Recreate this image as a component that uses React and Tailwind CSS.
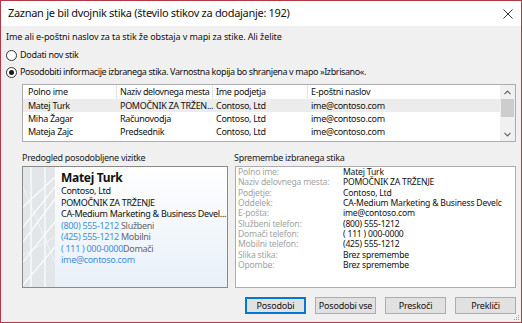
import React from "react";

const rows = [
  ["Matej Turk", "POMOČNIK ZA TRŽEN...", "Contoso, Ltd", "ime@contoso.com", true],
  ["Miha Žagar", "Računovodja", "Contoso, Ltd", "ime@contoso.com", false],
  ["Mateja Zajc", "Predsednik", "Contoso, Ltd", "ime@contoso.com", false],
];

const changes = [
  ["Polno ime:", "Matej Turk"],
  ["Naziv delovnega mesta:", "POMOČNIK ZA TRŽENJE"],
  ["Podjetje:", "Contoso, Ltd"],
  ["Oddelek:", "CA-Medium Marketing & Business Develc"],
  ["E-pošta:", "ime@contoso.com"],
  ["Službeni telefon:", "(800) 555-1212"],
  ["Domači telefon:", "( 111 ) 000-0000"],
  ["Mobilni telefon:", "(425) 555-1212"],
  ["Slika stika:", "Brez spremembe"],
  ["Opombe:", "Brez spremembe"],
];

function Radio({ checked }) {
  return (
    <span className="w-[11px] h-[11px] rounded-full border border-[#333] bg-white flex items-center justify-center shrink-0">
      {checked && <span className="w-[5px] h-[5px] rounded-full bg-[#1a1a1a]" />}
    </span>
  );
}

function Btn({ children, w, def }) {
  return (
    <div
      className={
        "h-[17px] flex items-center justify-center bg-[#e1e1e1] text-[9px] tracking-[-0.2px] " +
        (def ? "border border-[#0078d7] shadow-[inset_0_0_0_1px_#0078d7]" : "border border-[#adadad]")
      }
      style={{ width: w }}
    >
      {children}
    </div>
  );
}

export default function App() {
  return (
    <div className="w-[522px] h-[323px] bg-[#f0f0f0] border border-[#b03a48] flex flex-col font-['Noto_Sans',sans-serif] text-[#111] overflow-hidden relative">
      <div className="h-[25px] bg-white flex items-center justify-between pl-[7px] pr-[8px] shrink-0">
        <span className="text-[11px] tracking-[-0.3px]">Zaznan je bil dvojnik stika (število stikov za dodajanje: 192)</span>
        <svg width="10" height="10" viewBox="0 0 10 10">
          <path d="M0.5 0.5 L9.5 9.5 M9.5 0.5 L0.5 9.5" stroke="#333" strokeWidth="1" />
        </svg>
      </div>
      <div className="flex flex-col pl-[5px] text-[9px] tracking-[-0.3px]">
        <p className="mt-[5px] leading-[12px] tracking-[-0.1px]">
          Ime ali e-poštni naslov za ta stik že obstaja v mapi za stike. Ali želite
        </p>
        <div className="mt-[6px] h-[12px] flex items-center gap-[3px]">
          <Radio />
          <span>Dodati nov stik</span>
        </div>
        <div className="mt-[5px] h-[12px] flex items-center gap-[3px]">
          <Radio checked />
          <span className="tracking-[-0.4px]">Posodobiti informacije izbranega stika. Varnostna kopija bo shranjena v mapo »Izbrisano«.</span>
        </div>

        <div className="mt-[6px] ml-[16px] w-[494px] h-[58px] border border-[#abadb3] bg-white flex">
          <div className="w-[477px] flex flex-col">
            <div className="h-[14px] flex items-center">
              <div className="w-[94px] pl-[5px] h-full flex items-center border-r border-[#e5e5e5]">Polno ime</div>
              <div className="w-[96px] pl-[3px] h-full flex items-center border-r border-[#e5e5e5] whitespace-nowrap overflow-hidden tracking-[-0.4px]">Naziv delovnega mesta</div>
              <div className="w-[95px] pl-[3px] h-full flex items-center border-r border-[#e5e5e5]">Ime podjetja</div>
              <div className="flex-1 pl-[3px] h-full flex items-center">E-poštni naslov</div>
            </div>
            {rows.map((r) => (
              <div key={r[0]} className={"h-[13px] flex items-center " + (r[4] ? "bg-[#ececec]" : "")}>
                <div className="w-[94px] pl-[5px] whitespace-nowrap overflow-hidden">{r[0]}</div>
                <div className="w-[96px] pl-[3px] whitespace-nowrap overflow-hidden">{r[1]}</div>
                <div className="w-[95px] pl-[3px] whitespace-nowrap overflow-hidden">{r[2]}</div>
                <div className="flex-1 pl-[3px] whitespace-nowrap overflow-hidden">{r[3]}</div>
              </div>
            ))}
          </div>
          <div className="w-[15px] bg-[#f0f0f0] flex flex-col items-center">
            <div className="h-[14px] w-full flex items-center justify-center">
              <svg width="7" height="5" viewBox="0 0 7 5"><path d="M0.5 4.2 L3.5 1 L6.5 4.2" fill="none" stroke="#606060" strokeWidth="1.1" /></svg>
            </div>
            <div className="h-[18px] w-[13px] bg-[#cdcdcd]" />
            <div className="flex-1" />
            <div className="h-[14px] w-full flex items-center justify-center">
              <svg width="7" height="5" viewBox="0 0 7 5"><path d="M0.5 0.8 L3.5 4 L6.5 0.8" fill="none" stroke="#606060" strokeWidth="1.1" /></svg>
            </div>
          </div>
        </div>

        <div className="mt-[10px] ml-[16px] flex gap-[7px]">
          <div className="w-[206px] flex flex-col">
            <div className="h-[12px] leading-[12px] text-[#222]">Predogled posodobljene vizitke</div>
            <div className="mt-[2px] h-[122px] border border-[#8a8a8a] flex overflow-hidden">
              <div className="w-[32px] h-full bg-[#e3e6e9] relative">
                <svg width="32" height="120" viewBox="0 0 32 120" className="absolute inset-0">
                  <path d="M0 60 L32 20 M0 75 L32 32 M-4 100 L32 55 M0 118 L32 80 M8 0 L8 120 M22 0 L22 120 M0 40 L32 10" stroke="#ffffff" strokeOpacity="0.8" strokeWidth="1.4" />
                  <path d="M0 20 L32 95 M0 88 L32 70" stroke="#ffffff" strokeOpacity="0.5" strokeWidth="1" />
                </svg>
              </div>
              <div className="flex-1 bg-gradient-to-b from-white to-[#e8f0f9] pl-[6px] pt-[4px] flex flex-col whitespace-nowrap">
                <div className="text-[12px] font-bold leading-[14px] tracking-[-0.3px]">Matej Turk</div>
                <div className="leading-[11.5px]">Contoso, Ltd</div>
                <div className="leading-[11.5px]">POMOČNIK ZA TRŽENJE</div>
                <div className="leading-[11.5px]">CA-Medium Marketing &amp; Business Devel...</div>
                <div className="leading-[11.5px]"><span className="text-[#3d8fdb]">(800) 555-1212</span> <span className="text-[#666]">Službeni</span></div>
                <div className="leading-[11.5px]"><span className="text-[#3d8fdb]">(425) 555-1212</span> <span className="text-[#666]">Mobilni</span></div>
                <div className="leading-[11.5px]"><span className="text-[#3d8fdb]">( 111 ) 000-0000</span><span className="text-[#666]">Domači</span></div>
                <div className="leading-[11.5px] text-[#3d8fdb]">ime@contoso.com</div>
              </div>
            </div>
          </div>
          <div className="w-[281px] flex flex-col">
            <div className="h-[12px] leading-[12px] text-[#222] -ml-[1px]">Spremembe izbranega stika</div>
            <div className="mt-[2px] h-[122px] border border-[#abadb3] bg-white pl-[2px] flex flex-col whitespace-nowrap overflow-hidden text-[8.6px] tracking-[-0.2px]">
              {changes.map(([l, v]) => (
                <div key={l} className="h-[10.35px] leading-[10.35px] flex">
                  <span className="w-[105px] text-[#a3a3a3]">{l}</span>
                  <span>{v}</span>
                </div>
              ))}
            </div>
          </div>
        </div>

        <div className="mt-[9px] flex justify-end gap-[9px] pr-[5px]">
          <Btn w={61} def>Posodobi</Btn>
          <Btn w={61}>Posodobi vse</Btn>
          <Btn w={61}>Preskoči</Btn>
          <Btn w={61}>Prekliči</Btn>
        </div>
      </div>
      <svg width="6" height="6" viewBox="0 0 6 6" className="absolute right-[1px] bottom-[1px]">
        <rect x="4" y="0" width="1" height="1" fill="#999" />
        <rect x="2" y="2" width="1" height="1" fill="#999" />
        <rect x="4" y="2" width="1" height="1" fill="#999" />
        <rect x="0" y="4" width="1" height="1" fill="#999" />
        <rect x="2" y="4" width="1" height="1" fill="#999" />
        <rect x="4" y="4" width="1" height="1" fill="#999" />
      </svg>
    </div>
  );
}
